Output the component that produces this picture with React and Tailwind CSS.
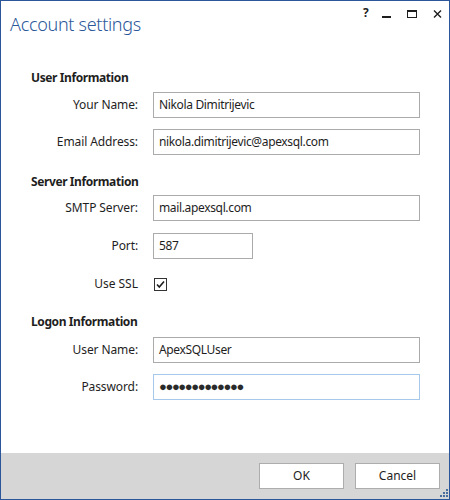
import React from 'react';

const font = { fontFamily: '"Noto Sans", "Open Sans", sans-serif' };

function Field({ label, value, width = 'w-[267px]', focused, className = '' }) {
  return (
    <div className={`flex items-center h-[26px] ${className}`}>
      <div className="w-[137px] text-right text-[12px] text-[#1e1e1e] shrink-0 tracking-[-0.1px]">{label}</div>
      <div
        className={`ml-[15px] h-[26px] ${width} border flex items-center px-[5px] text-[12px] tracking-[-0.35px] text-[#1e1e1e] bg-white ${
          focused ? 'border-[#a6c8ea]' : 'border-[#ababab]'
        }`}
      >
        {value}
      </div>
    </div>
  );
}

function Section({ children, className = '' }) {
  return (
    <div className={`h-[16px] leading-[16px] pl-[30px] text-[12px] font-bold tracking-[-0.4px] text-[#1e1e1e] ${className}`}>
      {children}
    </div>
  );
}

function Grip() {
  const dots = [
    [6, 0],
    [3, 3],
    [6, 3],
    [0, 6],
    [3, 6],
    [6, 6],
  ];
  return (
    <svg width="8" height="8" viewBox="0 0 8 8" className="absolute right-[1px] bottom-[2px]">
      {dots.map(([x, y], i) => (
        <rect key={i} x={x} y={y} width="2" height="2" fill="#4a6f9c" />
      ))}
    </svg>
  );
}

export default function App() {
  return (
    <div style={font} className="w-[450px] h-[500px] bg-white border border-[#2b579a] flex flex-col box-border">
      <div className="h-[69px] relative">
        <div className="absolute left-[9px] top-[10px] text-[18px] font-light tracking-[-0.3px] text-[#2b579a] leading-[26px]">
          Account settings
        </div>
        <div className="absolute top-[3px] left-[362px] text-[12px] font-bold text-[#1e1e1e]">?</div>
        <div className="absolute left-[381px] top-[15px] w-[9px] h-[2px] bg-[#1e1e1e]" />
        <div className="absolute left-[406px] top-[9px] w-[10px] h-[8px] border border-t-2 border-[#1e1e1e]" />
        <svg width="9" height="8" viewBox="0 0 9 8" className="absolute left-[432px] top-[9px]">
          <path d="M1 0.5 L8 7.5 M8 0.5 L1 7.5" stroke="#1e1e1e" strokeWidth="1.4" />
        </svg>
      </div>

      <Section>User Information</Section>
      <Field className="mt-[6px]" label="Your Name:" value="Nikola Dimitrijevic" />
      <Field className="mt-[11px]" label="Email Address:" value="nikola.dimitrijevic@apexsql.com" />

      <Section className="mt-[19px]">Server Information</Section>
      <Field className="mt-[5px]" label="SMTP Server:" value="mail.apexsql.com" />
      <Field className="mt-[12px]" label="Port:" value="587" width="w-[100px]" />
      <div className="flex items-center h-[26px] mt-[12px]">
        <div className="w-[137px] text-right text-[12px] text-[#1e1e1e]">Use SSL</div>
        <div className="ml-[16px] w-[13px] h-[13px] border border-[#333333] bg-white flex items-center justify-center">
          <svg width="11" height="11" viewBox="0 0 11 11">
            <path d="M2 5.5 L4.3 8 L9 2.5" fill="none" stroke="#1e1e1e" strokeWidth="1.6" />
          </svg>
        </div>
      </div>

      <Section className="mt-[17px]">Logon Information</Section>
      <Field className="mt-[7px]" label="User Name:" value="ApexSQLUser" />
      <Field
        className="mt-[11px]"
        label="Password:"
        focused
        value={<span className="tracking-[-1.4px] text-[13px] text-[#2a2a2a]">●●●●●●●●●●●●●</span>}
      />

      <div className="flex-1" />

      <div className="h-[46px] bg-[#d6d6d6] relative flex justify-end items-start pt-[10px] pr-[9px] gap-[11px]">
        <button className="w-[85px] h-[26px] bg-white border border-[#adadad] text-[12px] text-[#1e1e1e]">OK</button>
        <button className="w-[85px] h-[26px] bg-white border border-[#adadad] text-[12px] text-[#1e1e1e]">Cancel</button>
        <Grip />
      </div>
    </div>
  );
}
